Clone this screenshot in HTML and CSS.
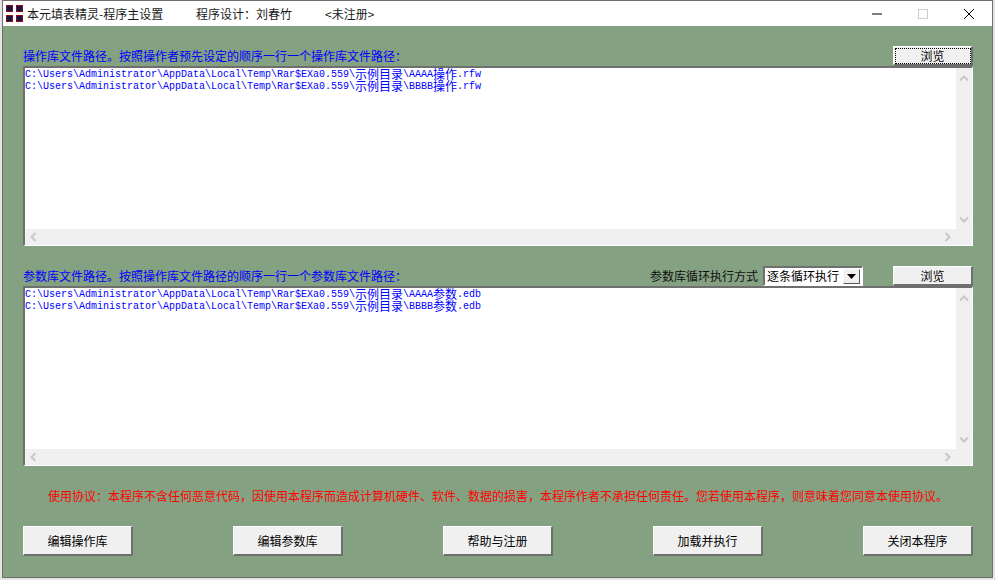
FILE: index.html
```html
<!DOCTYPE html>
<html lang="zh">
<head>
<meta charset="utf-8">
<title>本元填表精灵-程序主设置</title>
<link rel="stylesheet" href="styles.css">
</head>
<body>
<div class="window">
  <header class="titlebar">
    <div class="logo"><i></i><i></i><i></i><i></i></div>
    <span class="title-main">本元填表精灵-程序主设置</span>
    <span class="title-author">程序设计&#xFF1A;刘春竹</span>
    <span class="title-reg">&lt;未注册&gt;</span>
    <div class="controls">
      <svg class="ctl" width="46" height="25" viewBox="0 0 46 25"><path d="M18 13h10" stroke="#000" fill="none"/></svg>
      <svg class="ctl" width="46" height="25" viewBox="0 0 46 25"><rect x="18.5" y="8.5" width="9" height="9" stroke="#ccc" fill="none"/></svg>
      <svg class="ctl" width="46" height="25" viewBox="0 0 46 25"><path d="M18 8l10 10M28 8L18 18" stroke="#000" fill="none"/></svg>
    </div>
  </header>
  <main class="client">
    <section class="block">
      <div class="row">
        <label class="blue">操作库文件路径。按照操作者预先设定的顺序一行一个操作库文件路径&#xFF1A;</label>
        <button class="btn btn-small focused"><span>浏览</span></button>
      </div>
      <div class="panel">
        <div class="text">
          <div class="line">C:\Users\Administrator\AppData\Local\Temp\Rar$EXa0.559\<b>示例目录</b>\AAAA<b>操作</b>.rfw</div>
          <div class="line">C:\Users\Administrator\AppData\Local\Temp\Rar$EXa0.559\<b>示例目录</b>\BBBB<b>操作</b>.rfw</div>
        </div>
        <div class="vbar">
          <svg width="10" height="7" viewBox="0 0 10 7"><path d="M1 5.5l4-4 4 4" stroke="#c8c8c8" stroke-width="2" fill="none"/></svg>
          <svg width="10" height="7" viewBox="0 0 10 7"><path d="M1 1.5l4 4 4-4" stroke="#c8c8c8" stroke-width="2" fill="none"/></svg>
        </div>
        <div class="hbar">
          <svg width="7" height="10" viewBox="0 0 7 10"><path d="M5.5 1l-4 4 4 4" stroke="#c8c8c8" stroke-width="2" fill="none"/></svg>
          <svg width="7" height="10" viewBox="0 0 7 10"><path d="M1.5 1l4 4-4 4" stroke="#c8c8c8" stroke-width="2" fill="none"/></svg>
        </div>
        <div class="corner"></div>
      </div>
    </section>
    <section class="block">
      <div class="row">
        <label class="blue">参数库文件路径。按照操作库文件路径的顺序一行一个参数库文件路径&#xFF1A;</label>
        <div class="row-tools">
          <span class="mode-label">参数库循环执行方式</span>
          <div class="select"><span class="select-value">逐条循环执行</span><span class="select-arrow"><svg width="9" height="5" viewBox="0 0 9 5"><path d="M0 0h9L4.5 5z" fill="#000"/></svg></span></div>
        </div>
        <button class="btn btn-small"><span>浏览</span></button>
      </div>
      <div class="panel">
        <div class="text">
          <div class="line">C:\Users\Administrator\AppData\Local\Temp\Rar$EXa0.559\<b>示例目录</b>\AAAA<b>参数</b>.edb</div>
          <div class="line">C:\Users\Administrator\AppData\Local\Temp\Rar$EXa0.559\<b>示例目录</b>\BBBB<b>参数</b>.edb</div>
        </div>
        <div class="vbar">
          <svg width="10" height="7" viewBox="0 0 10 7"><path d="M1 5.5l4-4 4 4" stroke="#c8c8c8" stroke-width="2" fill="none"/></svg>
          <svg width="10" height="7" viewBox="0 0 10 7"><path d="M1 1.5l4 4 4-4" stroke="#c8c8c8" stroke-width="2" fill="none"/></svg>
        </div>
        <div class="hbar">
          <svg width="7" height="10" viewBox="0 0 7 10"><path d="M5.5 1l-4 4 4 4" stroke="#c8c8c8" stroke-width="2" fill="none"/></svg>
          <svg width="7" height="10" viewBox="0 0 7 10"><path d="M1.5 1l4 4-4 4" stroke="#c8c8c8" stroke-width="2" fill="none"/></svg>
        </div>
        <div class="corner"></div>
      </div>
    </section>
    <p class="agreement">使用协议&#xFF1A;本程序不含任何恶意代码&#xFF0C;因使用本程序而造成计算机硬件、软件、数据的损害&#xFF0C;本程序作者不承担任何责任。您若使用本程序&#xFF0C;则意味着您同意本使用协议。</p>
    <footer class="actions">
      <button class="btn btn-large"><span>编辑操作库</span></button>
      <button class="btn btn-large"><span>编辑参数库</span></button>
      <button class="btn btn-large"><span>帮助与注册</span></button>
      <button class="btn btn-large"><span>加载并执行</span></button>
      <button class="btn btn-large"><span>关闭本程序</span></button>
    </footer>
  </main>
</div>
</body>
</html>
```
FILE: styles.css
```css
* { box-sizing: border-box; }
html, body { margin: 0; padding: 0; }
body {
  width: 995px;
  height: 580px;
  overflow: hidden;
  background: #e4e4e4;
  font: 12px/12px "Noto Sans CJK SC", "Liberation Sans", sans-serif;
  color: #000;
}
.window {
  width: 991px;
  height: 578px;
  margin-left: 2px;
  border: 1px solid #6f6f6f;
  display: flex;
  flex-direction: column;
  background: #84a181;
}
.titlebar {
  height: 25px;
  flex: none;
  background: #fff;
  display: flex;
  align-items: center;
  color: #1a1a1a;
  padding-left: 3px;
}
.logo {
  width: 17px;
  height: 17px;
  display: grid;
  grid-template-columns: 7px 7px;
  grid-template-rows: 7px 7px;
  gap: 3px;
  margin-right: 4px;
}
.logo i { display: block; background: #14144a; border: 1px solid #8a1010; }
.title-main { width: 169px; }
.title-author { width: 129px; }
.title-reg { flex: 1; }
.controls { display: flex; }
.ctl { display: block; }
.client {
  flex: 1;
  padding: 20px 19px 0 20px;
  display: flex;
  flex-direction: column;
}
.block { margin-bottom: 20px; }
.block + .block { margin-bottom: 0; }
.row {
  height: 20px;
  display: flex;
  align-items: center;
  justify-content: space-between;
}
.row-tools {
  margin-left: auto;
  margin-right: 30px;
  display: flex;
  align-items: center;
  gap: 5px;
}
.blue { color: #0000ff; }
.mode-label { color: #111; }
.select {
  width: 100px;
  height: 20px;
  background: #fff;
  border: 1px solid #fff;
  border-top-color: #6f6f6f;
  border-left-color: #6f6f6f;
  box-shadow: inset 1px 1px 0 #6f6f6f;
  display: flex;
  align-items: center;
  justify-content: space-between;
  padding: 2px 2px 2px 3px;
}
.select-arrow {
  width: 17px;
  height: 15px;
  background: #f0f0f0;
  border: 1px solid #f8f8f8;
  border-right-color: #555;
  border-bottom-color: #555;
  display: flex;
  align-items: center;
  justify-content: center;
}
.btn {
  padding: 0;
  font: inherit;
  color: #000;
  background: #f0f0f0;
  border: 1px solid #fff;
  border-right: 2px solid #6f6f6f;
  border-bottom: 2px solid #6f6f6f;
  display: flex;
  align-items: center;
  justify-content: center;
}
.btn-small { width: 80px; height: 20px; }
.btn-large { width: 110px; height: 30px; }
.focused span {
  display: flex;
  align-items: center;
  justify-content: center;
  width: 74px;
  height: 14px;
  outline: 1px dotted #000;
}
.panel {
  height: 180px;
  display: grid;
  grid-template-columns: 1fr 16px;
  grid-template-rows: 1fr 16px;
  background: #fff;
  border-top: 2px solid #6f6f6f;
  border-left: 2px solid #6f6f6f;
  border-right: 1px solid #fff;
  border-bottom: 1px solid #fff;
  box-shadow: inset -1px -1px 0 #e3e3e3;
}
.text {
  padding-top: 1px;
  color: #0000ff;
  font: 10px/12px "Liberation Mono", monospace;
  white-space: nowrap;
}
.line {
  height: 12px;
  display: flex;
  align-items: center;
}
.line b {
  margin-bottom: 2px;
  font: 12px/12px "Noto Sans CJK SC", sans-serif;
}
.vbar {
  background: #f0f0f0;
  display: flex;
  flex-direction: column;
  justify-content: space-between;
  align-items: center;
  padding: 7px 0 6px;
}
.hbar {
  background: #f0f0f0;
  display: flex;
  justify-content: space-between;
  align-items: center;
  padding: 0 5px;
}
.corner { background: #f0f0f0; }
.agreement {
  margin: 0;
  height: 60px;
  padding-top: 24px;
  text-align: center;
  color: #ff0000;
}
.actions {
  display: flex;
  justify-content: space-between;
}
```
